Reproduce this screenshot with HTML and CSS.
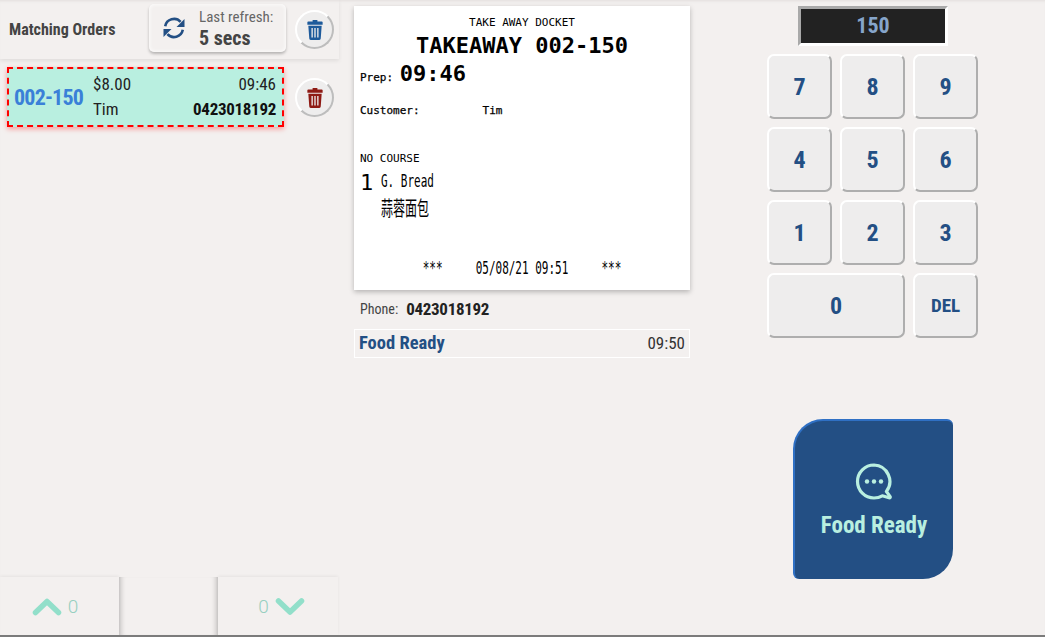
FILE: index.html
```html
<!DOCTYPE html>
<html lang="en">
<head>
<meta charset="utf-8">
<title>Matching Orders</title>
<link rel="stylesheet" href="styles.css">
</head>
<body>
<div class="app">
  <section class="orders">
    <header class="orders-head">
      <span class="orders-title">Matching Orders</span>
      <button class="refresh">
        <svg class="refresh-icon" viewBox="0 0 24 24" width="24" height="24"><path d="M3.2 10.2A9 9 0 0 1 18.6 5.8" fill="none" stroke="#234f84" stroke-width="2.6"/><path d="M20.8 13.8A9 9 0 0 1 5.4 18.2" fill="none" stroke="#234f84" stroke-width="2.6"/><path d="M22.5 3v8h-8zM1.5 21v-8h8z" fill="#234f84"/></svg>
        <span class="refresh-text"><span class="refresh-label">Last refresh:</span><b class="refresh-value">5 secs</b></span>
      </button>
      <button class="round-btn">
        <svg viewBox="0 0 16 22" width="16" height="21"><path d="M5.5 2.5V1h5v1.5H15a1 1 0 0 1 1 1V6H0V3.500a1 1 0 0 1 1-1z M1 7h14l-1 13.500a1.500 1.500 0 0 1-1.500 1.500h-9A1.500 1.500 0 0 1 2 20.500z M4.300 9.500v10h1.400v-10z M7.300 9.500v10h1.400v-10z M10.300 9.500v10h1.400v-10z" fill="#1d5a9b" fill-rule="evenodd"/></svg>
      </button>
    </header>
    <div class="order-list">
      <div class="order-row">
        <article class="order-card">
          <span class="order-no">002-150</span>
          <div class="order-info">
            <div class="order-line"><span>$8.00</span><span>09:46</span></div>
            <div class="order-line"><span>Tim</span><b>0423018192</b></div>
          </div>
        </article>
        <button class="round-btn">
          <svg viewBox="0 0 16 22" width="16" height="21"><path d="M5.5 2.5V1h5v1.5H15a1 1 0 0 1 1 1V6H0V3.500a1 1 0 0 1 1-1z M1 7h14l-1 13.500a1.500 1.500 0 0 1-1.500 1.500h-9A1.500 1.500 0 0 1 2 20.500z M4.300 9.500v10h1.400v-10z M7.300 9.500v10h1.400v-10z M10.300 9.500v10h1.400v-10z" fill="#8e1a14" fill-rule="evenodd"/></svg>
        </button>
      </div>
    </div>
    <footer class="pager">
      <div class="pager-btn pager-up">
        <svg viewBox="0 0 30 20" width="30" height="20"><path d="M3.500 16.500 15 5.500l11.500 11" fill="none" stroke="#92dfca" stroke-width="5.500" stroke-linecap="round" stroke-linejoin="round"/></svg>
        <span class="pager-count">0</span>
      </div>
      <div class="pager-mid"></div>
      <div class="pager-btn pager-down">
        <span class="pager-count">0</span>
        <svg viewBox="0 0 30 20" width="30" height="20"><path d="M3.500 5 15 16l11.500-11" fill="none" stroke="#92dfca" stroke-width="5.500" stroke-linecap="round" stroke-linejoin="round"/></svg>
      </div>
    </footer>
  </section>

  <section class="detail">
    <div class="docket">
      <div class="d-center d-first">TAKE AWAY DOCKET</div>
      <div class="d-center d-big">TAKEAWAY 002-150</div>
      <div class="d-prep"><span class="d-prep-label">Prep:</span> <b class="d-big">09:46</b></div>
      <div class="d-customer">Customer:<span class="d-customer-name">Tim</span></div>
      <div class="d-course">NO COURSE</div>
      <div class="d-item">
        <span class="d-qty">1</span>
        <div class="d-names">
          <div class="d-tall">G. Bread</div>
          <div class="d-tall d-cjk">蒜蓉面包</div>
        </div>
      </div>
      <div class="d-center d-foot"><span class="d-tall">***     05/08/21 09:51     ***</span></div>
    </div>
    <div class="phone"><span class="phone-label">Phone:</span><b class="phone-value">0423018192</b></div>
    <div class="status-row"><b class="status-name">Food Ready</b><span class="status-time">09:50</span></div>
  </section>

  <section class="entry">
    <div class="display">150</div>
    <div class="keypad">
      <button class="key">7</button><button class="key">8</button><button class="key">9</button>
      <button class="key">4</button><button class="key">5</button><button class="key">6</button>
      <button class="key">1</button><button class="key">2</button><button class="key">3</button>
      <button class="key key-wide">0</button><button class="key key-del">DEL</button>
    </div>
    <button class="ready-btn">
      <svg viewBox="0 0 40 40" width="40" height="40"><path d="M20 3a16.500 16.500 0 1 0 0 33c3 0 6-.8 8.300-2.200l6.700 2c1 .3 1.600-.6 1-1.400l-3.600-4.900A16.500 16.500 0 0 0 20 3z" fill="none" stroke="#b9efe0" stroke-width="3.200" stroke-linejoin="round"/><circle cx="13" cy="19.500" r="2.200" fill="#b9efe0"/><circle cx="20" cy="19.500" r="2.200" fill="#b9efe0"/><circle cx="27" cy="19.500" r="2.200" fill="#b9efe0"/></svg>
      <span class="ready-label">Food Ready</span>
    </button>
  </section>
</div>
</body>
</html>
```
FILE: styles.css
```css
* { box-sizing: border-box; }
html, body { margin: 0; height: 100%; }
body {
  background: #f3f0ef;
  font-family: Roboto, "Liberation Sans", sans-serif;
  font-stretch: 75%;
  color: #222;
  overflow: hidden;
}
button { font-family: inherit; font-stretch: inherit; padding: 0; cursor: pointer; }
.app {
  display: flex;
  height: 637px;
  border-bottom: 2px solid #7b7b7b;
  box-shadow: inset 0 3px 3px -2px #e2dedd;
}

/* left */
.orders { width: 339px; display: flex; flex-direction: column; }
.orders-head {
  height: 59px;
  display: flex;
  align-items: center;
  padding: 0 5px 0 9px;
  box-shadow: 0 2px 4px rgba(0,0,0,.08);
}
.orders-title { font-size: 16px; font-weight: bold; color: #444; width: 140px; }
.refresh {
  width: 137px;
  height: 48px;
  margin-top: -3px;
  margin-right: 9px;
  display: flex;
  align-items: center;
  gap: 13px;
  padding-left: 13px;
  background: #f3f0ef;
  border: none;
  border-radius: 5px;
  box-shadow: 0 2px 3px rgba(0,0,0,.25), inset 0 0 4px #fff;
}
.refresh-text { display: flex; flex-direction: column; align-items: flex-start; padding-top: 1px; }
.refresh-label { font-size: 15px; line-height: 19px; color: #666; white-space: nowrap; }
.refresh-value { font-size: 20px; line-height: 22px; color: #444; white-space: nowrap; }
.round-btn {
  width: 39px;
  height: 39px;
  flex: none;
  display: flex;
  align-items: center;
  justify-content: center;
  border-radius: 50%;
  background: #eeeded;
  border: 2px solid;
  border-color: #fff #bdbdbd #bdbdbd #fff;
}
.order-list { flex: 1; padding: 8px 5px 0 7px; }
.order-row { display: flex; align-items: center; gap: 11px; }
.order-card {
  flex: 1;
  height: 60px;
  display: flex;
  align-items: center;
  gap: 9px;
  padding: 0 6px 0 5px;
  background: #b9efe0;
  border: 2px dashed #f00;
  box-shadow: 0 2px 5px rgba(255,0,0,.35);
}
.order-no { width: 70px; flex: none; font-size: 22px; letter-spacing: -.8px; font-weight: bold; color: #3a80d8; white-space: nowrap; }
.order-info { flex: 1; }
.order-line { display: flex; justify-content: space-between; font-size: 17px; line-height: 25px; color: #222; }
.order-line b { color: #111; letter-spacing: -.3px; }
.pager { display: flex; height: 58px; margin-right: 1px; }
.pager-btn {
  flex: 0 0 120px;
  display: flex;
  align-items: center;
  justify-content: center;
  gap: 6px;
  box-shadow: 0 -1px 3px rgba(0,0,0,.06);
}
.pager-up { flex-basis: 119px; padding-right: 9px; }
.pager-down { padding-left: 7px; }
.pager-mid { flex: 1; box-shadow: inset 6px 0 5px -4px rgba(0,0,0,.2), inset -6px 0 5px -4px rgba(0,0,0,.2); }
.pager-count { font-size: 19px; font-weight: 300; font-stretch: 100%; color: #97cfc0; }

/* middle */
.detail { width: 336px; margin-left: 15px; padding-top: 6px; }
.docket {
  height: 284px;
  padding: 10px 6px 0;
  background: #fff;
  box-shadow: 0 2px 5px rgba(0,0,0,.25);
  font-family: "DejaVu Sans Mono", monospace;
  font-stretch: normal;
  font-size: 11px;
  color: #000;
}
.d-center { text-align: center; white-space: pre; }
.d-first { line-height: 14px; margin-bottom: 3px; }
.d-big { font-size: 22px; font-weight: bold; line-height: 26px; }
.d-prep { line-height: 30px; margin-top: 2px; }
.d-prep-label { font-size: 11px; -webkit-text-stroke: .25px #000; }
.d-customer { margin-top: 11px; line-height: 14px; -webkit-text-stroke: .25px #000; }
.d-customer-name { margin-left: 63px; }
.d-course { margin-top: 34px; line-height: 14px; }
.d-item { display: flex; margin-top: 4px; }
.d-qty { width: 21px; font-size: 22px; font-weight: 500; line-height: 26px; }
.d-names { display: flex; flex-direction: column; }
.d-tall { display: inline-block; transform: scaleY(1.6); }
.d-names .d-tall { line-height: 18px; height: 18px; margin-top: 3px; }
.d-cjk { font-family: "Noto Sans CJK SC", sans-serif; font-size: 12px; transform: scaleY(1.7); margin-top: 8px !important; }
.d-foot { margin-top: 43px; line-height: 18px; }
.phone { display: flex; align-items: center; gap: 8px; height: 38px; padding-left: 6px; }
.phone-label { font-size: 14px; color: #444; }
.phone-value { font-size: 17px; letter-spacing: -.3px; color: #222; }
.status-row {
  display: flex;
  justify-content: space-between;
  align-items: center;
  height: 29px;
  margin-top: 1px;
  padding: 0 4px 2px;
  border: 1px solid #fff;
}
.status-name { font-size: 18.500px; color: #234f84; }
.status-time { font-size: 17px; color: #333; }

/* right */
.entry { flex: 1; padding: 6px 0 0 77px; display: flex; flex-direction: column; }
.display {
  width: 150px;
  height: 40px;
  margin-left: 31px;
  background: #222;
  border: 3px solid;
  border-color: #a9a9a9 #fff #fff #a9a9a9;
  color: #86a5cb;
  font-size: 22px;
  font-weight: bold;
  line-height: 34px;
  text-align: center;
}
.keypad {
  width: 211px;
  margin-top: 8px;
  display: grid;
  grid-template-columns: repeat(3, 65px);
  grid-auto-rows: 65px;
  gap: 8px;
}
.key {
  background: #eeeded;
  border: 2px solid;
  border-color: #fff #aeaeae #aeaeae #fff;
  border-radius: 7px;
  color: #234f84;
  font-size: 24px;
  font-weight: bold;
}
.key-wide { grid-column: span 2; }
.key-del { font-size: 19px; }
.ready-btn {
  width: 160px;
  height: 160px;
  margin: 81px 0 0 26px;
  display: flex;
  flex-direction: column;
  align-items: center;
  gap: 10px;
  padding-top: 41px;
  background: #234f84;
  border: none;
  border-top: 2px solid #2f70c4;
  border-left: 2px solid #2f70c4;
  border-radius: 30px 6px 30px 6px;
}
.ready-label { font-size: 23px; font-weight: bold; color: #b9efe0; }
```
